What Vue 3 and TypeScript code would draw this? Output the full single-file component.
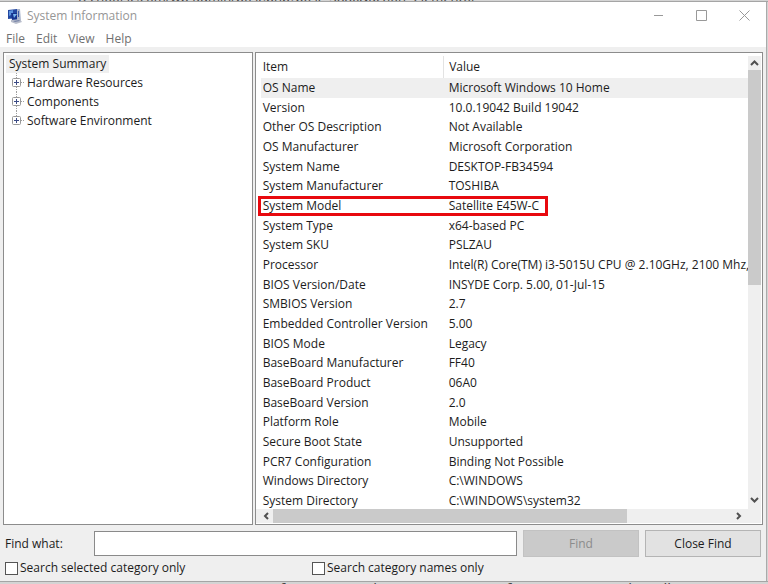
<script setup lang="ts">
import { ref } from 'vue'

interface Entry {
  item: string
  value: string
  selected?: boolean
  marked?: boolean
}

const menus: string[] = ['File', 'Edit', 'View', 'Help']
const categories: string[] = ['Hardware Resources', 'Components', 'Software Environment']

const entries: Entry[] = [
  { item: 'OS Name', value: 'Microsoft Windows 10 Home', selected: true },
  { item: 'Version', value: '10.0.19042 Build 19042' },
  { item: 'Other OS Description', value: 'Not Available' },
  { item: 'OS Manufacturer', value: 'Microsoft Corporation' },
  { item: 'System Name', value: 'DESKTOP-FB34594' },
  { item: 'System Manufacturer', value: 'TOSHIBA' },
  { item: 'System Model', value: 'Satellite E45W-C', marked: true },
  { item: 'System Type', value: 'x64-based PC' },
  { item: 'System SKU', value: 'PSLZAU' },
  { item: 'Processor', value: 'Intel(R) Core(TM) i3-5015U CPU @ 2.10GHz, 2100 Mhz,' },
  { item: 'BIOS Version/Date', value: 'INSYDE Corp. 5.00, 01-Jul-15' },
  { item: 'SMBIOS Version', value: '2.7' },
  { item: 'Embedded Controller Version', value: '5.00' },
  { item: 'BIOS Mode', value: 'Legacy' },
  { item: 'BaseBoard Manufacturer', value: 'FF40' },
  { item: 'BaseBoard Product', value: '06A0' },
  { item: 'BaseBoard Version', value: '2.0' },
  { item: 'Platform Role', value: 'Mobile' },
  { item: 'Secure Boot State', value: 'Unsupported' },
  { item: 'PCR7 Configuration', value: 'Binding Not Possible' },
  { item: 'Windows Directory', value: 'C:\\WINDOWS' },
  { item: 'System Directory', value: 'C:\\WINDOWS\\system32' },
]

const query = ref('')
const selectedOnly = ref(false)
const namesOnly = ref(false)
</script>

<template>
  <div class="desktop">
    <div class="behind behind-top"><span>techoogic.com/wp-admin/post.php?post=3886&amp;action=elementor</span></div>
    <main class="window">
      <header class="titlebar">
        <svg class="app-icon" width="14" height="16" viewBox="0 0 14 16" aria-hidden="true">
          <path d="M0 2 9 1v9l-9 1z" fill="#2347a0" />
          <path d="M1 3 5 2v4L1 8z" fill="#5c93df" />
          <path d="M3 5h8l1 7H4z" fill="#15328e" />
          <path d="M5 6h4l-3 4z" fill="#76b5ee" />
          <path d="M9 1h3l1 12H9z" fill="#a9b4cc" />
          <path d="M10 3h1v6h-1z" fill="#3d5ba8" />
          <path d="m3 12 9-1 2 3-6 2-5-2z" fill="#b8bdcb" />
          <path d="m5 13 6-1 1 1-5 1z" fill="#7784a8" />
        </svg>
        <h1>System Information</h1>
        <div class="controls">
          <button type="button" aria-label="Minimize">
            <svg width="11" height="11" viewBox="0 0 11 11"><path d="M1 5.500h9" /></svg>
          </button>
          <button type="button" aria-label="Maximize">
            <svg width="11" height="11" viewBox="0 0 11 11"><path d="M.5.5h10v10H.5z" /></svg>
          </button>
          <button type="button" aria-label="Close">
            <svg width="11" height="11" viewBox="0 0 11 11"><path d="m.5.5 10 10M10.500.5l-10 10" /></svg>
          </button>
        </div>
      </header>

      <nav class="menubar">
        <button v-for="menu in menus" :key="menu" type="button">{{ menu }}</button>
      </nav>

      <div class="panes">
        <section class="pane tree">
          <span class="root">System Summary</span>
          <ul>
            <li v-for="category in categories" :key="category">
              <svg width="15" height="19" viewBox="0 0 15 19" aria-hidden="true">
                <path class="branch" d="M5.500 0v19M10 9.500h4" stroke="#a0a0a0" stroke-dasharray="1 1" />
                <rect x="1.500" y="5.500" width="8" height="8" rx="1" fill="#fff" stroke="#999" />
                <path d="M3 9.500h5M5.500 7v5" stroke="#3c4c86" />
              </svg>
              <span>{{ category }}</span>
            </li>
          </ul>
        </section>

        <section class="pane details">
          <div class="list">
            <table>
              <thead>
                <tr><th class="item" scope="col">Item</th><th scope="col">Value</th></tr>
              </thead>
              <tbody>
                <tr v-for="entry in entries" :key="entry.item" :class="{ selected: entry.selected, marked: entry.marked }">
                  <td>{{ entry.item }}</td>
                  <td>{{ entry.value }}</td>
                </tr>
              </tbody>
            </table>
          </div>
          <div class="vbar">
            <svg width="13" height="14" viewBox="0 0 13 14"><path d="m3 9 3.500-3.500L10 9" /></svg>
            <div class="track"><div class="thumb"></div></div>
            <svg width="13" height="18" viewBox="0 0 13 18"><path d="m3 7 3.500 3.500L10 7" /></svg>
          </div>
          <div class="hbar">
            <svg width="12" height="14" viewBox="0 0 12 14"><path d="M7 4 4 7l3 3" /></svg>
            <div class="track"><div class="thumb"></div></div>
            <svg width="14" height="14" viewBox="0 0 14 14"><path d="m4 4 3 3-3 3" /></svg>
          </div>
        </section>
      </div>

      <form class="find" @submit.prevent>
        <div class="row">
          <label class="prompt" for="query">Find what:</label>
          <input id="query" v-model="query" class="query" type="text" />
          <button type="submit" disabled>Find</button>
          <button type="button">Close Find</button>
        </div>
        <div class="row checks">
          <label><input v-model="selectedOnly" type="checkbox" />Search selected category only</label>
          <label><input v-model="namesOnly" type="checkbox" />Search category names only</label>
        </div>
      </form>
    </main>
    <div class="behind behind-bottom"><span>version of iterm</span><span>The</span><span>software</span><span>that allows</span></div>
  </div>
</template>

<style>
body {
  margin: 0;
}
</style>

<style scoped>
*,
*::after {
  box-sizing: border-box;
}

.desktop {
  display: flex;
  flex-direction: column;
  height: 100vh;
  overflow: hidden;
  background: #d4d4d4;
  color: #1c1c1c;
  font: 12px/16px "Open Sans", "Noto Sans", sans-serif;
}

button,
input {
  font: inherit;
  color: inherit;
}

svg {
  display: block;
  flex: none;
  fill: none;
}

.behind {
  overflow: hidden;
  color: #444;
  flex: none;
  white-space: nowrap;
}

.behind-top {
  display: flex;
  height: 2px;
  align-items: flex-end;
  padding-left: 78px;
  font-size: 13px;
  line-height: 8px;
  border-bottom: 1px solid #a5a5a5;
}

.behind-bottom {
  display: grid;
  grid-template-columns: 149px 125px 133px 1fr;
  height: 3px;
  padding-left: 216px;
  font-size: 15px;
  line-height: 12px;
  border-top: 1px solid #a5a5a5;
}

.window {
  flex: 1;
  min-height: 0;
  display: flex;
  flex-direction: column;
  margin-right: 1px;
  background: #efefef;
  border-right: 1px solid #aaa;
}

.titlebar {
  display: flex;
  align-items: center;
  height: 27px;
  padding-left: 8px;
  gap: 5px;
  background: #fff;
  color: #969696;
}

h1 {
  flex: 1;
  margin: 0;
  font-size: 12px;
  font-weight: 400;
}

.controls {
  display: flex;
}

.controls button {
  display: flex;
  align-items: center;
  justify-content: center;
  width: 43px;
  height: 27px;
  padding: 0;
  border: 0;
  background: none;
}

.controls path {
  stroke: #999;
}

.menubar {
  display: flex;
  gap: 11px;
  height: 18px;
  padding-left: 6px;
  background: #fff;
  color: #707070;
}

.menubar button {
  height: 18px;
  padding: 0;
  border: 0;
  background: none;
  line-height: 20px;
}

.panes {
  flex: 1;
  min-height: 0;
  display: grid;
  grid-template-columns: 250fr 509fr;
  gap: 2px;
  padding: 5px 3px 0;
}

.pane {
  min-width: 0;
  min-height: 0;
  border: 1px solid #8c8c8c;
  background: #fff;
}

.tree {
  padding: 2px;
}

.root {
  display: block;
  width: fit-content;
  height: 18px;
  padding: 0 3px;
  background: #efefef;
  line-height: 18px;
}

.tree ul {
  margin: 0;
  padding: 0 0 0 5px;
  list-style: none;
}

.tree li {
  display: flex;
  align-items: center;
  gap: 1px;
  height: 19px;
}

.tree li:last-child .branch {
  clip-path: inset(0 0 9px 0);
}

.details {
  display: grid;
  grid-template-columns: 1fr 13px;
  grid-template-rows: 1fr 14px;
  padding: 3px 1px 1px 0;
  overflow: hidden;
}

.list {
  min-width: 0;
  min-height: 0;
  padding-left: 5px;
  overflow: hidden;
}

table {
  width: 100%;
  height: calc(100% + 2px);
  table-layout: fixed;
  border-collapse: collapse;
}

.item {
  width: 183px;
  border-right: 1px solid #e3e3e3;
}

th,
td {
  padding: 0 0 0 2px;
  text-align: left;
  font-weight: 400;
  white-space: nowrap;
  line-height: 16px;
}

th {
  height: 22px;
}

th + th,
td + td {
  padding-left: 5px;
}

.selected {
  background: #efefef;
}

.marked {
  position: relative;
}

.marked td:first-child::after {
  content: "";
  position: absolute;
  inset: 0 auto 0 -3px;
  width: 290px;
  border: 3px solid #e8090f;
}

.vbar,
.hbar {
  display: flex;
  background: #efefef;
}

.vbar {
  flex-direction: column;
}

.hbar {
  grid-column: 1 / -1;
  padding: 0 14px 0 5px;
}

.vbar path,
.hbar path {
  stroke: #505050;
  stroke-width: 2;
}

.track {
  flex: 1;
}

.thumb {
  background: #cacaca;
}

.vbar .thumb {
  width: 100%;
  height: 51%;
}

.hbar .thumb {
  width: 77%;
  height: 100%;
}

.find {
  padding: 5px 5px 5px;
}

.row {
  display: flex;
  align-items: center;
}

.row .prompt {
  width: 89px;
}

.query {
  flex: 1;
  min-width: 0;
  height: 25px;
  padding: 0 4px;
  border: 1px solid #8a8a8a;
  background: #fff;
}

.row button {
  width: 116px;
  height: 27px;
  margin-left: 6px;
  padding: 0;
  border: 1px solid #b4b4b4;
  background: #e2e2e2;
}

.row button:disabled {
  border-color: #c2c2c2;
  background: #cacaca;
  color: #8c8c8c;
}

.checks {
  display: grid;
  grid-template-columns: 307px 1fr;
  padding-top: 3px;
}

.checks label {
  display: flex;
  align-items: center;
  gap: 2px;
}

.checks input {
  appearance: none;
  width: 13px;
  height: 13px;
  margin: 0;
  border: 1px solid #555;
  background: #fff;
}

.checks input:checked {
  background: #555;
}
</style>
